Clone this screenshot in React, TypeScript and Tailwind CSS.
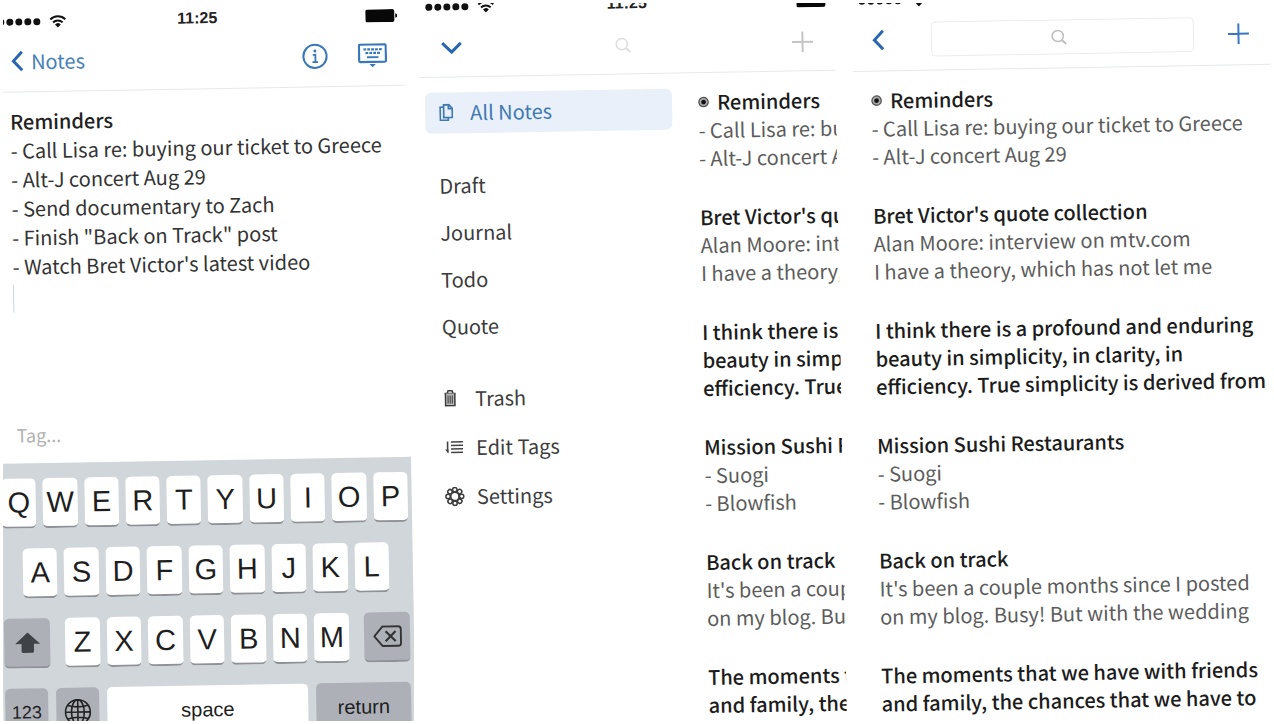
import type { ReactNode } from "react";
import clsx from "clsx";

const notes = [
  { title: ["Reminders"], body: ["- Call Lisa re: buying our ticket to Greece", "- Alt-J concert Aug 29"], pinned: true },
  { title: ["Bret Victor's quote collection"], body: ["Alan Moore: interview on mtv.com", "I have a theory, which has not let me"] },
  { title: ["I think there is a profound and enduring", "beauty in simplicity, in clarity, in", "efficiency. True simplicity is derived from"], body: [] },
  { title: ["Mission Sushi Restaurants"], body: ["- Suogi", "- Blowfish"] },
  { title: ["Back on track"], body: ["It's been a couple months since I posted", "on my blog. Busy! But with the wedding"] },
  { title: ["The moments that we have with friends", "and family, the chances that we have to"], body: [] },
];

const reminderLines = [
  "- Call Lisa re: buying our ticket to Greece",
  "- Alt-J concert Aug 29",
  "- Send documentary to Zach",
  "- Finish \"Back on Track\" post",
  "- Watch Bret Victor's latest video",
];

const tags = ["Draft", "Journal", "Todo", "Quote"];

const tools = [
  { label: "Trash", icon: <TrashIcon /> },
  { label: "Edit Tags", icon: <EditTagsIcon /> },
  { label: "Settings", icon: <GearIcon /> },
];

function TrashIcon() {
  return (
    <svg width="12" height="18" viewBox="0 0 12 18" fill="none" stroke="#3c3c3c" strokeWidth="1.5">
      <path d="M3.2 3.6L4 1.2h4l.8 2.4M.5 4h11" />
      <path d="M1.3 4v12.2h9.4V4" fill="#b5b5b5" />
      <path d="M3.9 6v8M6 6v8M8.1 6v8" strokeWidth="1" />
    </svg>
  );
}

function EditTagsIcon() {
  return (
    <svg width="18" height="14" viewBox="0 0 18 14" fill="none" stroke="#444" strokeWidth="1.6">
      <path d="M6 1.5h12M6 5h12M6 8.5h12M6 12h12M2.6 1v11" />
      <path d="M0 9h3.4v4z" fill="#444" stroke="none" />
    </svg>
  );
}

function GearIcon() {
  return (
    <svg className="-ml-px" width="20" height="20" viewBox="-10 -10 20 20" fill="none" stroke="#3c3c3c" strokeWidth="1.5">
      {[0, 45, 90, 135, 180, 225, 270, 315].map((angle) => (
        <circle key={angle} cy="-6.8" r="2.2" transform={`rotate(${angle})`} />
      ))}
      <circle r="4.1" />
    </svg>
  );
}

function NotesIcon() {
  return (
    <svg width="14" height="18" viewBox="0 0 14 18" fill="none" stroke="#3f79b4" strokeWidth="1.7">
      <path d="M4.5 1.2h5.2l3.4 3.6v9.2H4.5zM9.3 1.2v4h3.8" />
      <path d="M4.5 3.6H1v13h8V14" />
    </svg>
  );
}

function InfoIcon() {
  return (
    <svg width="26" height="26" viewBox="0 0 26 26" fill="none" stroke="#3878b8" strokeWidth="2">
      <circle cx="13" cy="13" r="11.6" />
      <circle cx="13" cy="7.6" r="1.5" fill="#3878b8" stroke="none" />
      <path d="M10.8 11.4h2.6v7.4M10.4 18.8h5.6" strokeWidth="1.8" />
    </svg>
  );
}

function KeyboardIcon() {
  return (
    <svg width="29" height="24" viewBox="0 0 29 24" fill="none" stroke="#3878b8" strokeWidth="2.2">
      <rect x="1.1" y="1.1" width="26.8" height="17.4" rx="1" />
      <path d="M5.5 6h18.5M7.5 9.6h14.5" strokeDasharray="2.8 1.1" />
      <path d="M9 13.8h11.5" strokeWidth="1.8" />
      <path d="M11.3 20.6h6.4l-3.2 3.2z" fill="#3878b8" stroke="none" />
    </svg>
  );
}

function BackIcon() {
  return (
    <svg width="12" height="21" viewBox="0 0 12 21" fill="none" stroke="#2a66b0" strokeWidth="3">
      <path d="M11 1.2L2.4 10.5L11 19.8" />
    </svg>
  );
}

function DownIcon() {
  return (
    <svg width="21" height="13" viewBox="0 0 21 13" fill="none" stroke="#2a66b0" strokeWidth="3">
      <path d="M1.2 1.6L10.5 10.6L19.8 1.6" />
    </svg>
  );
}

function PlusIcon({ color }: { color: string }) {
  return (
    <svg width="21" height="21" viewBox="0 0 21 21" fill="none" stroke={color} strokeWidth="2">
      <path d="M10.5 0v21M0 10.5h21" />
    </svg>
  );
}

function SearchIcon({ color }: { color: string }) {
  return (
    <svg width="16" height="16" viewBox="0 0 16 16" fill="none" stroke={color} strokeWidth="1.5">
      <circle cx="6.8" cy="6.6" r="5.6" />
      <path d="M10.8 10.6l4.2 4" strokeWidth="2" />
    </svg>
  );
}

function StatusBar() {
  return (
    <div className="grid h-[30px] grid-cols-[1fr_auto_1fr] items-center px-[6px] pt-2 text-black">
      <div className="flex items-center gap-[2px]">
        {[0, 1, 2, 3, 4].map((dot) => (
          <span key={dot} className="size-[7px] rounded-full bg-[#111]" />
        ))}
        <svg className="ml-[7px]" width="17" height="13" viewBox="0 0 17 13" fill="none" stroke="#111" strokeWidth="2">
          <path d="M1 4.6a10.6 10.6 0 0 1 15 0M3.7 7.6a6.8 6.8 0 0 1 9.6 0" />
          <path d="M5.6 9.6a4.1 4.1 0 0 1 5.8 0L8.5 12.6z" fill="#111" stroke="none" />
        </svg>
      </div>
      <span className="font-['Liberation_Sans',Arial,sans-serif] text-[16px] leading-5 font-bold text-[#222]">11:25</span>
      <svg className="justify-self-end" width="32" height="13" viewBox="0 0 32 13" fill="#080808">
        <rect width="29" height="13" rx="2" />
        <path d="M30 4.2q2 .6 2 2.3t-2 2.3z" />
      </svg>
    </div>
  );
}

function NavBar({ className, children }: { className?: string; children: ReactNode }) {
  return <header className={clsx("flex h-[60px] items-center border-b border-[#e6e8ea] pb-[2px]", className)}>{children}</header>;
}

function NoteList() {
  return (
    <ul className="flex flex-col gap-[31px] pt-[15px] text-[20px] leading-7 whitespace-nowrap">
      {notes.map((note) => (
        <li key={note.title[0]}>
          <h2 className="font-medium text-[#1c1c1c]">
            {note.title.map((line) => (
              <span key={line} className="flex items-center gap-2">
                {note.pinned && (
                  <svg width="11" height="12" viewBox="0 0 12 12" fill="none">
                    <circle cx="6" cy="6" r="5.1" fill="#aaa" stroke="#555" strokeWidth="1.4" />
                    <circle cx="6" cy="6" r="2.6" fill="#111" />
                  </svg>
                )}
                {line}
              </span>
            ))}
          </h2>
          {note.body.map((line) => (
            <p key={line} className="text-[#5c5c5c]">{line}</p>
          ))}
        </li>
      ))}
    </ul>
  );
}

function Key({ dark, className, label, children }: { dark?: boolean; className?: string; label?: string; children: ReactNode }) {
  return (
    <button
      aria-label={label}
      className={clsx(
        "flex h-[50px] items-center justify-center rounded-[5px] border-b-2 border-[#8e9297]",
        dark ? "bg-[#adb1b7]" : "bg-white",
        className ?? "flex-1 text-[29px]",
      )}
    >
      {children}
    </button>
  );
}

function Keyboard() {
  return (
    <div className="flex flex-col gap-5 bg-[#d1d6da] pt-[15px] pr-[4px] pb-5 pl-[2px] font-['Liberation_Sans',Arial,sans-serif] leading-none text-[#1e1e1e]">
      <div className="flex gap-[7px]">
        {"QWERTYUIOP".split("").map((letter) => <Key key={letter}>{letter}</Key>)}
      </div>
      <div className="flex gap-[7px] px-5">
        {"ASDFGHJKL".split("").map((letter) => <Key key={letter}>{letter}</Key>)}
      </div>
      <div className="flex gap-[15px]">
        <Key dark label="shift" className="w-[46px]">
          <svg width="25" height="21" viewBox="0 0 25 21" fill="#3f4347">
            <path d="M12.5 0L25 11.5h-6.3V19q0 1.5-1.5 1.5H7.8q-1.5 0-1.5-1.5v-7.5H0z" />
          </svg>
        </Key>
        <div className="flex flex-1 gap-[7px]">
          {"ZXCVBNM".split("").map((letter) => <Key key={letter}>{letter}</Key>)}
        </div>
        <Key dark label="delete" className="w-[46px]">
          <svg width="29" height="22" viewBox="0 0 29 22" fill="none" stroke="#333" strokeWidth="1.9">
            <path d="M9.5 1.2H25q2.8 0 2.8 2.8v14q0 2.8-2.8 2.8H9.5L1.2 11z" strokeLinejoin="round" />
            <path d="M12.5 6l10 10M22.5 6l-10 10" strokeWidth="2.2" />
          </svg>
        </Key>
      </div>
      <div className="flex gap-2">
        <Key dark className="w-[43px] text-[18px]">123</Key>
        <Key dark label="next keyboard" className="w-[43px]">
          <svg width="27" height="27" viewBox="0 0 27 27" fill="none" stroke="#222" strokeWidth="1.6">
            <circle cx="13.5" cy="13.5" r="12.4" />
            <ellipse cx="13.5" cy="13.5" rx="6.4" ry="12.4" />
            <path d="M13.5 1v25M1 13.5h25M3.4 6.8q10.1 3 20.2 0M3.4 20.2q10.1-3 20.2 0" />
          </svg>
        </Key>
        <Key className="flex-1 text-[20px]">space</Key>
        <Key dark className="w-[95px] text-[20px]">return</Key>
      </div>
    </div>
  );
}

function EditorScreen() {
  return (
    <section className="overflow-hidden pr-[11px]">
      <div className="-ml-3 origin-top-left -rotate-1">
        <StatusBar />
        <NavBar className="justify-between pr-[17px] pl-[19px]">
          <a href="#notes" className="flex items-center gap-2 text-[20px] leading-7 text-[#4580b8]">
            <BackIcon />
            Notes
          </a>
          <div className="flex items-center gap-[30px]">
            <button aria-label="Note info"><InfoIcon /></button>
            <button aria-label="Toggle keyboard"><KeyboardIcon /></button>
          </div>
        </NavBar>
        <article className="min-h-[317px] pt-[14px] pl-[17px] text-[20px] leading-[29px] whitespace-nowrap text-[#333]">
          <h1 className="font-medium text-[#222]">Reminders</h1>
          {reminderLines.map((line) => <p key={line}>{line}</p>)}
          <span className="mt-1 block h-7 w-px bg-[#cfd4e6]" />
        </article>
        <input
          aria-label="Tag"
          placeholder="Tag..."
          className="block h-[54px] w-full pb-1 pl-[18px] text-[18px] placeholder:text-[#b0b0b0] focus:outline-none"
        />
        <Keyboard />
      </div>
    </section>
  );
}

function SidebarScreen() {
  return (
    <section className="overflow-hidden pr-[13px]">
      <div className="-mt-[15px] origin-top-left -rotate-1">
        <StatusBar />
        <NavBar className="justify-between pr-[22px] pl-[21px]">
          <button aria-label="Close menu" className="pt-1"><DownIcon /></button>
          <button aria-label="Search" className="pr-2 pt-1"><SearchIcon color="#dedede" /></button>
          <button aria-label="New note" className="pt-1"><PlusIcon color="#c4c4c4" /></button>
        </NavBar>
        <div className="flex overflow-hidden">
          <nav className="w-[277px] shrink-0 pt-[15px] text-[20px] leading-7 text-[#3c3c3c]">
            <a href="#all" className="ml-1 flex h-[41px] w-[247px] items-center gap-[17px] rounded-md bg-[#e9f0fa] pb-[2px] pl-[14px] text-[#3f79b4]">
              <NotesIcon />
              All Notes
            </a>
            <div className="mt-7 flex flex-col pl-[17px]">
              {tags.map((tag) => (
                <a key={tag} href={`#${tag}`} className="flex h-[47px] items-center">{tag}</a>
              ))}
            </div>
            <div className="mt-6 flex flex-col pl-[18px]">
              {tools.map((tool) => (
                <a key={tool.label} href={`#${tool.label}`} className="flex h-[49px] items-center">
                  <span className="w-[31px]">{tool.icon}</span>
                  {tool.label}
                </a>
              ))}
            </div>
          </nav>
          <div className="min-w-0 flex-1">
            <NoteList />
          </div>
        </div>
      </div>
    </section>
  );
}

function ListScreen() {
  return (
    <section className="overflow-hidden">
      <div className="-mt-[21px] origin-top-left -rotate-1">
        <StatusBar />
        <NavBar className="pr-[23px] pl-[19px]">
          <button aria-label="Back"><BackIcon /></button>
          <label className="mr-[34px] ml-[47px] flex h-[35px] flex-1 items-center rounded-[5px] border border-[#ebebeb]">
            <span className="flex w-full justify-center pr-2"><SearchIcon color="#bdbdbd" /></span>
            <input aria-label="Search notes" className="w-0 focus:outline-none" />
          </label>
          <button aria-label="New note"><PlusIcon color="#3878c0" /></button>
        </NavBar>
        <div className="pl-[17px]">
          <NoteList />
        </div>
      </div>
    </section>
  );
}

export default function App() {
  return (
    <main className="grid h-screen grid-cols-[411fr_428fr_419fr] gap-[5px] overflow-hidden bg-white p-[3px] font-['Noto_Sans_CJK_SC','Noto_Sans',sans-serif]">
      <EditorScreen />
      <SidebarScreen />
      <ListScreen />
    </main>
  );
}
